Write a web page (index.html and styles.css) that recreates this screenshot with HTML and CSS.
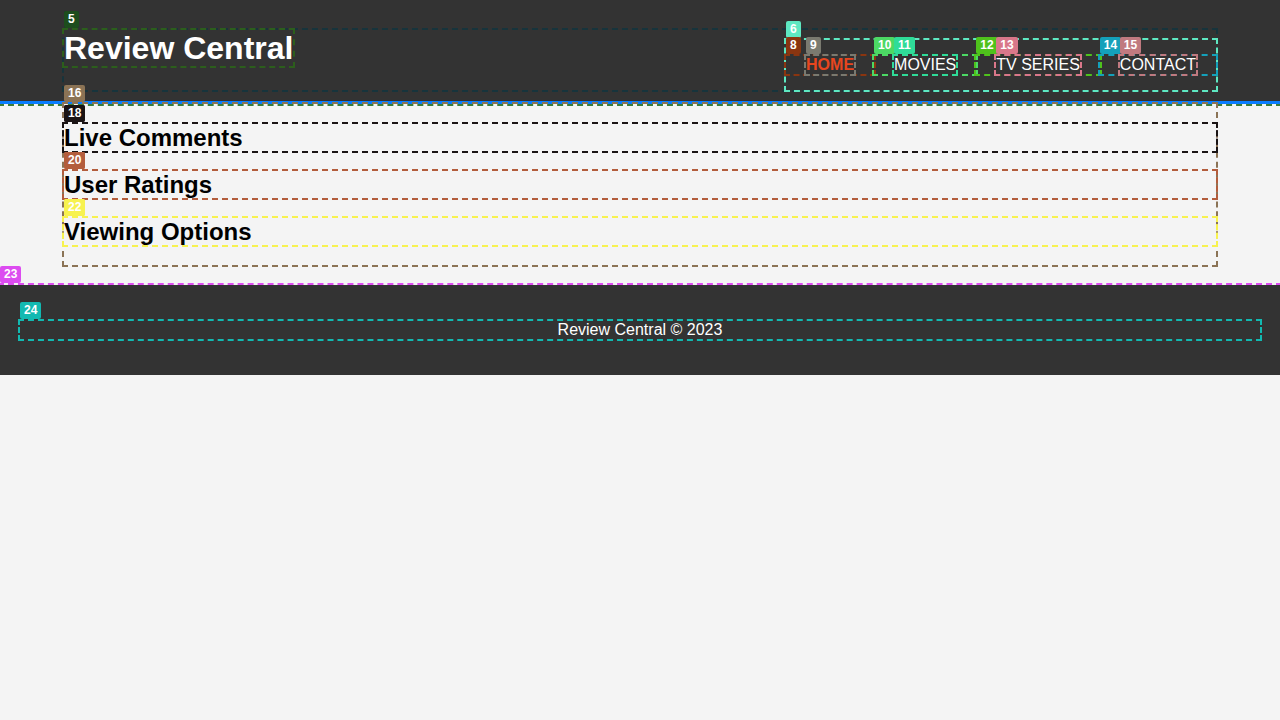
FILE: index.html
```html
<!DOCTYPE html>
<html lang="en">
<head>
<meta charset="utf-8">
<title>Review Central</title>
<link rel="stylesheet" href="styles.css">
</head>
<body>
<header class="site-header dbg c3">
  <div class="container header-inner dbg c4"><span class="badge">4</span>
    <h1 class="logo dbg c5"><span class="badge">5</span>Review Central</h1>
    <nav class="nav dbg c6"><span class="badge">6</span>
      <ul class="menu">
        <li class="menu-item dbg c8"><span class="badge">8</span><a class="menu-link active dbg c9" href="#"><span class="badge">9</span>HOME</a></li>
        <li class="menu-item dbg c10"><span class="badge">10</span><a class="menu-link dbg c11" href="#"><span class="badge">11</span>MOVIES</a></li>
        <li class="menu-item dbg c12"><span class="badge">12</span><a class="menu-link dbg c13" href="#"><span class="badge">13</span>TV SERIES</a></li>
        <li class="menu-item dbg c14"><span class="badge">14</span><a class="menu-link dbg c15" href="#"><span class="badge">15</span>CONTACT</a></li>
      </ul>
    </nav>
  </div>
</header>
<main class="container main dbg c16"><span class="badge">16</span>
  <section class="block dbg c17"><span class="badge">17</span>
    <h2 class="block-title dbg c18"><span class="badge">18</span>Live Comments</h2>
  </section>
  <section class="block dbg c19"><span class="badge">19</span>
    <h2 class="block-title dbg c20"><span class="badge">20</span>User Ratings</h2>
  </section>
  <section class="block dbg c21"><span class="badge">21</span>
    <h2 class="block-title dbg c22"><span class="badge">22</span>Viewing Options</h2>
  </section>
</main>
<footer class="site-footer dbg c23"><span class="badge">23</span>
  <p class="copy dbg c24"><span class="badge">24</span>Review Central © 2023</p>
</footer>
</body>
</html>
```
FILE: styles.css
```css
html, body {
  margin: 0;
  padding: 0;
}
body {
  background: #f4f4f4;
  font-family: "Liberation Sans", Arial, sans-serif;
  color: #000;
}

/* debug outlines + badges */
.dbg {
  position: relative;
  outline: 2px dashed var(--c);
}
.badge {
  position: absolute;
  left: 0;
  bottom: calc(100% + 2px);
  z-index: 10;
  background: var(--c);
  color: #fff;
  font-family: "Liberation Sans", Arial, sans-serif;
  font-size: 12px;
  font-weight: bold;
  line-height: 17px;
  height: 17px;
  padding: 0 4px;
  border-radius: 2px;
  white-space: nowrap;
}
.c3 { --c: #3b7d3b; }
.c4 { --c: #17343c; }
.c5 { --c: #2c5e1c; }
.c6 { --c: #5ee8c2; }
.c8 { --c: #8a3510; }
.c9 { --c: #7a7a70; }
.c10 { --c: #4cd964; }
.c11 { --c: #2fdc98; }
.c12 { --c: #4fc21c; }
.c13 { --c: #d9778a; }
.c14 { --c: #14a0ba; }
.c15 { --c: #c07a80; }
.c16 { --c: #8b7355; }
.c17 { --c: #5a3c4c; }
.c18 { --c: #1a1414; }
.c19 { --c: #c2734f; }
.c20 { --c: #b35d3c; }
.c21 { --c: #e6d46c; }
.c22 { --c: #f7f24f; }
.c23 { --c: #dc4cf0; }
.c24 { --c: #12b9b1; }
.c5 > .badge { background: #1d4d1d; }

/* layout */
.container {
  width: 90%;
  margin: 0 auto;
}
.site-header {
  background: #333;
  color: #fff;
  padding: 30px 0 11px;
  border-bottom: 3px solid #0a7cff;
}
.header-inner {
  display: flex;
  justify-content: space-between;
  align-items: flex-start;
}
.logo {
  margin: 0;
  font-size: 32px;
  font-weight: bold;
  line-height: 36px;
}
.nav {
  margin-top: 10px;
}
.menu {
  display: flex;
  list-style: none;
  margin: 16px 0;
  padding: 0;
}
.menu-item {
  padding: 0 20px;
  font-size: 16px;
  line-height: 18px;
}
.menu-link {
  color: #fff;
  text-decoration: none;
  display: inline-block;
}
.menu-link.active {
  color: #e8461e;
  font-weight: bold;
}

.main {
  display: flow-root;
}
.block-title {
  font-size: 24px;
  font-weight: bold;
  line-height: 27px;
  margin: 19.92px 0;
}

.site-footer {
  margin-top: 20px;
  padding: 20px;
  background: #333;
  color: #fff;
  text-align: center;
}
.copy {
  margin: 16px 0;
  font-size: 16px;
  line-height: 18px;
}
```
